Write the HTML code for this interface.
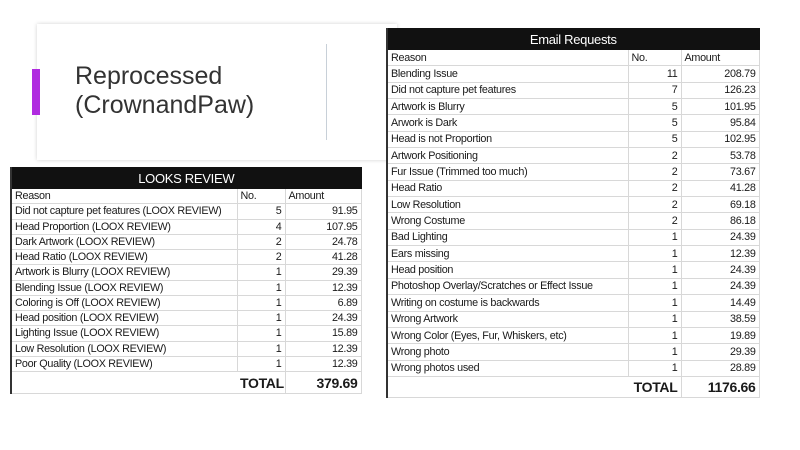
<!DOCTYPE html>
<html><head><meta charset="utf-8"><style>
*{margin:0;padding:0;box-sizing:border-box}
body{width:800px;height:450px;background:#fff;position:relative;overflow:hidden;font-family:"Liberation Sans",sans-serif}
.card{position:absolute;left:37px;top:24px;width:360px;height:136px;background:#fff;box-shadow:0 0 4px rgba(0,0,0,.18)}
.bar{position:absolute;left:32px;top:69px;width:8px;height:46px;background:#b02be0}
.title{position:absolute;left:75px;top:62px;font-size:25px;line-height:29px;color:#333}
.vl{position:absolute;left:326px;top:44px;width:1px;height:96px;background:#c8d0d8}
table{position:absolute;border-collapse:collapse;font-size:10.8px;color:#1a1a1a;table-layout:fixed;background:#fff;letter-spacing:-0.3px}
td{border:1px solid #d8d8d8;padding:0 3px;white-space:nowrap;overflow:hidden}
td.r{text-align:right}
tr.h td{background:#111;color:#fff;text-align:center;font-size:13px;border-color:#111}
tr.t td{font-weight:bold;font-size:14px;text-align:right}
</style></head><body>
<div class="card"></div>
<div class="bar"></div>
<div class="title">Reprocessed<br>(CrownandPaw)</div>
<div class="vl"></div>

<table style="left:386px;top:28px;width:372px;border-left:2px solid #333">
<colgroup><col style="width:241px"><col style="width:53px"><col style="width:78px"></colgroup>
<tr class="h" style="height:21px"><td colspan="3">Email Requests</td></tr>
<tr style="height:16.35px"><td>Reason</td><td>No.</td><td>Amount</td></tr>
<tr style="height:16.35px"><td>Blending Issue</td><td class="r">11</td><td class="r">208.79</td></tr>
<tr style="height:16.35px"><td>Did not capture pet features</td><td class="r">7</td><td class="r">126.23</td></tr>
<tr style="height:16.35px"><td>Artwork is Blurry</td><td class="r">5</td><td class="r">101.95</td></tr>
<tr style="height:16.35px"><td>Arwork is Dark</td><td class="r">5</td><td class="r">95.84</td></tr>
<tr style="height:16.35px"><td>Head is not Proportion</td><td class="r">5</td><td class="r">102.95</td></tr>
<tr style="height:16.35px"><td>Artwork Positioning</td><td class="r">2</td><td class="r">53.78</td></tr>
<tr style="height:16.35px"><td>Fur Issue (Trimmed too much)</td><td class="r">2</td><td class="r">73.67</td></tr>
<tr style="height:16.35px"><td>Head Ratio</td><td class="r">2</td><td class="r">41.28</td></tr>
<tr style="height:16.35px"><td>Low Resolution</td><td class="r">2</td><td class="r">69.18</td></tr>
<tr style="height:16.35px"><td>Wrong Costume</td><td class="r">2</td><td class="r">86.18</td></tr>
<tr style="height:16.35px"><td>Bad Lighting</td><td class="r">1</td><td class="r">24.39</td></tr>
<tr style="height:16.35px"><td>Ears missing</td><td class="r">1</td><td class="r">12.39</td></tr>
<tr style="height:16.35px"><td>Head position</td><td class="r">1</td><td class="r">24.39</td></tr>
<tr style="height:16.35px"><td>Photoshop Overlay/Scratches or Effect Issue</td><td class="r">1</td><td class="r">24.39</td></tr>
<tr style="height:16.35px"><td>Writing on costume is backwards</td><td class="r">1</td><td class="r">14.49</td></tr>
<tr style="height:16.35px"><td>Wrong Artwork</td><td class="r">1</td><td class="r">38.59</td></tr>
<tr style="height:16.35px"><td>Wrong Color (Eyes, Fur, Whiskers, etc)</td><td class="r">1</td><td class="r">19.89</td></tr>
<tr style="height:16.35px"><td>Wrong photo</td><td class="r">1</td><td class="r">29.39</td></tr>
<tr style="height:16.35px"><td>Wrong photos used</td><td class="r">1</td><td class="r">28.89</td></tr>
<tr class="t" style="height:21px"><td style="border-right:none"></td><td style="border-left:none">TOTAL</td><td>1176.66</td></tr>
</table>

<table style="left:10px;top:167px;width:350px;border-left:2px solid #333">
<colgroup><col style="width:226px"><col style="width:48px"><col style="width:76px"></colgroup>
<tr class="h" style="height:21px"><td colspan="3">LOOKS REVIEW</td></tr>
<tr style="height:15.25px"><td>Reason</td><td>No.</td><td>Amount</td></tr>
<tr style="height:15.25px"><td>Did not capture pet features (LOOX REVIEW)</td><td class="r">5</td><td class="r">91.95</td></tr>
<tr style="height:15.25px"><td>Head Proportion (LOOX REVIEW)</td><td class="r">4</td><td class="r">107.95</td></tr>
<tr style="height:15.25px"><td>Dark Artwork (LOOX REVIEW)</td><td class="r">2</td><td class="r">24.78</td></tr>
<tr style="height:15.25px"><td>Head Ratio (LOOX REVIEW)</td><td class="r">2</td><td class="r">41.28</td></tr>
<tr style="height:15.25px"><td>Artwork is Blurry (LOOX REVIEW)</td><td class="r">1</td><td class="r">29.39</td></tr>
<tr style="height:15.25px"><td>Blending Issue (LOOX REVIEW)</td><td class="r">1</td><td class="r">12.39</td></tr>
<tr style="height:15.25px"><td>Coloring is Off (LOOX REVIEW)</td><td class="r">1</td><td class="r">6.89</td></tr>
<tr style="height:15.25px"><td>Head position (LOOX REVIEW)</td><td class="r">1</td><td class="r">24.39</td></tr>
<tr style="height:15.25px"><td>Lighting Issue (LOOX REVIEW)</td><td class="r">1</td><td class="r">15.89</td></tr>
<tr style="height:15.25px"><td>Low Resolution (LOOX REVIEW)</td><td class="r">1</td><td class="r">12.39</td></tr>
<tr style="height:15.25px"><td>Poor Quality (LOOX REVIEW)</td><td class="r">1</td><td class="r">12.39</td></tr>
<tr class="t" style="height:22px"><td style="border-right:none"></td><td style="border-left:none">TOTAL</td><td>379.69</td></tr>
</table>
</body></html>
